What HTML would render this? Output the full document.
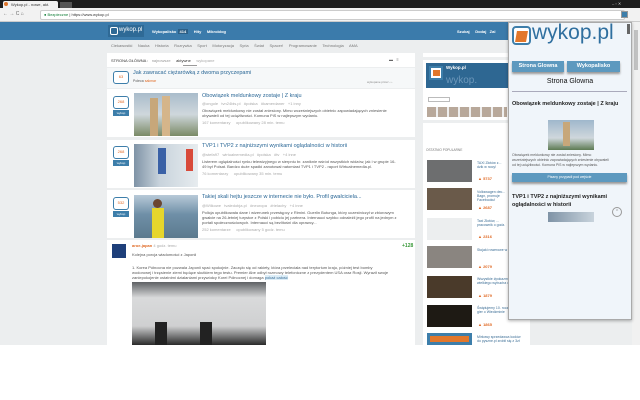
<!DOCTYPE html>
<html><head><meta charset="utf-8"><style>
*{margin:0;padding:0;box-sizing:border-box}
body{width:640px;height:400px;overflow:hidden;background:#fff;font-family:"Liberation Sans",sans-serif;position:relative}
.a{position:absolute}
.t{font-size:4px;color:#555;white-space:nowrap}
.vote{position:absolute;width:16px;height:13px;border:1.5px solid #3d7eaa;border-radius:3px;background:#fff;font-size:4px;color:#e06a25;text-align:center;line-height:10px}
.wb{position:absolute;width:16px;height:6px;background:#3d7eaa;color:#fff;font-size:3px;text-align:center;line-height:6px}
.it{position:absolute;left:107px;width:308px;background:#fff}
.ttl{font-size:5.5px;color:#2a6796}
.thumb{position:absolute;width:33px;height:22px}
.sb{position:absolute;left:427px;width:45px;height:22px}
</style></head><body>
<div class="a" style="left:0;top:0;width:640px;height:8px;background:#1e1e1e"></div>
<div class="a" style="left:3px;top:1px;width:55px;height:7px;background:#f2f2f2;border-radius:2px 2px 0 0;font-size:4px;color:#333;padding:1px 0 0 8px">Wykop.pl - nowe, akt.</div>
<div class="a" style="left:4px;top:2px;width:4px;height:4px;border-radius:50%;background:#e0762b"></div>
<div class="a" style="left:60px;top:2px;width:12px;height:6px;background:#555"></div>
<div class="a t" style="left:612px;top:1px;color:#ccc">– ▫ ✕</div>
<div class="a" style="left:0;top:8px;width:640px;height:14px;background:#f2f2f2;border-bottom:1px solid #ccc"></div>
<div class="a t" style="left:3px;top:11px;color:#666;font-size:5px">← → C ⌂</div>
<div class="a" style="left:40px;top:10px;width:585px;height:10px;background:#fff;border:1px solid #ccc;border-radius:2px"></div>
<div class="a t" style="left:44px;top:12px;color:#0a7a32">● Bezpieczne <span style="color:#333">| https://www.wykop.pl</span></div>
<div class="a" style="left:621px;top:11px;width:7px;height:7px;background:#3d7eaa;border:1px solid #999"></div>
<div class="a" style="left:0;top:22px;width:632px;height:323px;background:#eceeef"></div>
<div class="a" style="left:632px;top:22px;width:8px;height:323px;background:#f1f1f1"></div>
<div class="a" style="left:634px;top:30px;width:4px;height:40px;background:#c1c1c1"></div>
<div class="a" style="left:0;top:22px;width:632px;height:18px;background:#3b7bab"></div>
<div class="a" style="left:108px;top:25px;width:36px;height:12px;background:#2f6a96"></div>
<div class="a" style="left:110px;top:27px;width:8px;height:8px;border:1.5px solid #fff;border-radius:2px"></div>
<div class="a" style="left:119px;top:27px;font-size:6px;color:#fff">wykop.pl</div>
<div class="a t" style="left:152px;top:29px;color:#fff;font-weight:bold">Wykopalisko <span style="background:#2c5f86;padding:0 2px">414</span> &nbsp; &nbsp; Hity &nbsp; &nbsp; Mikroblog</div>
<div class="a t" style="left:457px;top:29px;color:#fff;font-weight:bold">Szukaj &nbsp; &nbsp; Dodaj &nbsp; Zal</div>
<div class="a t" style="left:111px;top:43px;color:#777">Ciekawostki &nbsp; &nbsp; Nauka &nbsp; &nbsp; Historia &nbsp; &nbsp; Rozrywka &nbsp; &nbsp; Sport &nbsp; &nbsp; Motoryzacja &nbsp; &nbsp; Syria &nbsp; &nbsp; Świat &nbsp; &nbsp; Spacer! &nbsp; &nbsp; Programowanie &nbsp; &nbsp; Technologia &nbsp; &nbsp; AMA</div>
<div class="it" style="top:53px;height:14px"></div>
<div class="a t" style="left:111px;top:58px;color:#333">STRONA GŁÓWNA : &nbsp; <span style="color:#999">najnowsze</span> &nbsp; &nbsp; <span style="color:#333">aktywne</span> &nbsp; &nbsp; <span style="color:#aaa">wykopane</span></div>
<div class="a" style="left:183px;top:65px;width:14px;height:1px;background:#999"></div>
<div class="a t" style="left:389px;top:57px;color:#666">▬ &nbsp; ≡</div>
<div class="it" style="top:68px;height:20px;background:#f6f8f9"></div>
<div class="vote" style="left:113px;top:71px">63</div>
<div class="a ttl" style="left:133px;top:70px">Jak zawracać ciężarówką z dwoma przyczepami</div>
<div class="a t" style="left:133px;top:79px;font-size:3.5px">Poleca <span style="color:#e06a25">sakmar</span></div>
<div class="a t" style="left:367px;top:80px;font-size:3px;color:#888">wykopane przez ‹ ›</div>
<div class="it" style="top:89px;height:48px"></div>
<div class="vote" style="left:113px;top:96px">268</div><div class="wb" style="left:113px;top:110px">wykop</div>
<div class="thumb" style="left:134px;top:93px;width:64px;height:43px;background:linear-gradient(#a9bccb,#cfd7dc 50%,#7a8a66)"></div>
<div class="a" style="left:150px;top:98px;width:8px;height:38px;background:#c7a77a"></div>
<div class="a" style="left:162px;top:96px;width:8px;height:40px;background:#d5b58a"></div>
<div class="a ttl" style="left:202px;top:93px">Obowiązek meldunkowy zostaje | Z kraju</div>
<div class="a t" style="left:202px;top:101px;color:#aaa">@ongole &nbsp; tvn24bis.pl &nbsp; #polska &nbsp; #kamerdaner &nbsp; +1 inny</div>
<div class="a t" style="left:202px;top:108px">Obowiązek meldunkowy nie został zniesiony. Mimo wcześniejszych obietnic zapowiadających zniesienie</div>
<div class="a t" style="left:202px;top:113px">obywateli od tej uciążliwości. Komuna PiS w najlepszym wydaniu.</div>
<div class="a t" style="left:202px;top:120px;color:#aaa">167 komentarzy &nbsp; &nbsp; opublikowany 28 min. temu</div>
<div class="it" style="top:140px;height:48px"></div>
<div class="vote" style="left:113px;top:146px">268</div><div class="wb" style="left:113px;top:160px">wykop</div>
<div class="thumb" style="left:134px;top:144px;width:64px;height:43px;background:linear-gradient(90deg,#7f93a6,#c8d3dc 40%,#e7ecef)"></div>
<div class="a" style="left:158px;top:148px;width:8px;height:26px;background:#3a61a6"></div>
<div class="a" style="left:186px;top:149px;width:7px;height:22px;background:#d84a3a"></div>
<div class="a ttl" style="left:202px;top:143px">TVP1 i TVP2 z najniższymi wynikami oglądalności w historii</div>
<div class="a t" style="left:202px;top:152px;color:#aaa">@stefa97 &nbsp; wirtualnemedia.pl &nbsp; #polska &nbsp; #tv &nbsp; +4 inne</div>
<div class="a t" style="left:202px;top:159px">Listerem oglądalności rynku telewizyjnego w sierpniu br. zaniknie wśród wszystkich widzów, jak i w grupie 16-</div>
<div class="a t" style="left:202px;top:164px">49 był Polsat. Bardzo duże spadki zanotował natomiast TVP1 i TVP2 - raport Wirtualnemedia.pl.</div>
<div class="a t" style="left:202px;top:171px;color:#aaa">76 komentarzy &nbsp; &nbsp; opublikowany 35 min. temu</div>
<div class="it" style="top:190px;height:48px"></div>
<div class="vote" style="left:113px;top:197px">532</div><div class="wb" style="left:113px;top:211px">wykop</div>
<div class="thumb" style="left:134px;top:195px;width:64px;height:43px;background:linear-gradient(#b8c9d8,#6f8fa7 45%,#5b7a8e)"></div>
<div class="a" style="left:152px;top:208px;width:12px;height:30px;background:#e6d62c"></div>
<div class="a" style="left:153px;top:199px;width:9px;height:9px;background:#6b4630;border-radius:50%"></div>
<div class="a ttl" style="left:202px;top:194px">Takiej skali hejtu jeszcze w internecie nie było. Profil gwałciciela...</div>
<div class="a t" style="left:202px;top:203px;color:#aaa">@Wilkowe &nbsp; tvaledobja.pl &nbsp; #neuropa &nbsp; #rielachy &nbsp; +4 inne</div>
<div class="a t" style="left:202px;top:210px">Policja opublikowała dane i wizerunek przestępcy z Rimini. Guerlin Butunga, który uczestniczył w zbiorowym</div>
<div class="a t" style="left:202px;top:215px">gwałcie na 26-letniej turystce z Polski i pobiciu jej partnera. Internauci szybko odnaleźli jego profil na jednym z</div>
<div class="a t" style="left:202px;top:220px">portali społecznościowych. Internauci są bezlitośni dla oprawcy...</div>
<div class="a t" style="left:202px;top:227px;color:#aaa">252 komentarze &nbsp; &nbsp; opublikowany 5 godz. temu</div>
<div class="it" style="top:240px;height:105px"></div>
<div class="a" style="left:112px;top:244px;width:14px;height:14px;background:#1e3f7a"></div>
<div class="a t" style="left:132px;top:243px"><b style="color:#e06a25">aroe-japan</b> <span style="color:#aaa">4 godz. temu</span></div>
<div class="a t" style="left:402px;top:243px;color:#3b9a3b;font-weight:bold;font-size:5px">+128</div>
<div class="a t" style="left:132px;top:252px">Kolejna porcja wiadomości z Japonii</div>
<div class="a t" style="left:132px;top:265px">1. Korea Północna nie pozwala Japonii spać spokojnie. Zaczęło się od rakiety, która przeleciała nad terytorium kraju, później test bomby</div>
<div class="a t" style="left:132px;top:270px">wodorowej i trzęsienie ziemi będące skutkiem tego testu. Premier Abe odbył rozmowy telefoniczne z prezydentem USA oraz Rosji. Wyraził swoje</div>
<div class="a t" style="left:132px;top:275px">zaniepokojenie ostatnimi działaniami przywódcy Korei Północnej i domaga <span style="background:#ddeef8;color:#3b6d95">pokaż całość</span></div>
<div class="a" style="left:132px;top:282px;width:134px;height:63px;background:linear-gradient(#5e6164,#d9dadb 25%,#cfd0d1 70%,#2a2a2a)"></div>
<div class="a" style="left:155px;top:322px;width:12px;height:23px;background:#222"></div>
<div class="a" style="left:200px;top:322px;width:12px;height:23px;background:#222"></div>
<div class="a" style="left:423px;top:53px;width:107px;height:4px;background:#fff"></div>
<div class="a" style="left:423px;top:60px;width:107px;height:60px;background:#fff"></div>
<div class="a" style="left:426px;top:63px;width:90px;height:25px;background:#2e6792"></div>
<div class="a" style="left:429px;top:66px;width:14px;height:14px;background:#fff;border:2px solid #3d7eaa"></div>
<div class="a" style="left:433px;top:70px;width:7px;height:6px;background:#e2772b"></div>
<div class="a" style="left:446px;top:75px;font-size:10px;color:#6c97ba">wykop.</div>
<div class="a t" style="left:446px;top:65px;color:#fff;font-weight:bold;font-size:4.5px">Wykop.pl</div>
<div class="a" style="left:428px;top:97px;width:22px;height:5px;background:#fff;border:1px solid #bbb"></div>
<div class="a t" style="left:427px;top:113px;font-size:3.5px">Bądź pierwszą osobą wśród znajomych, któ</div>
<div class="a" style="left:427px;top:107px;width:80px;height:10px;background:repeating-linear-gradient(90deg,#b8a89a 0 9px,#eee 9px 11px)"></div>
<div class="a" style="left:423px;top:123px;width:107px;height:222px;background:#fff"></div>
<div class="a t" style="left:426px;top:148px;font-size:3.2px;color:#777">OSTATNIO POPULARNE</div>
<div class="sb" style="top:160px;background:#6d6e6f"></div>
<div class="sb" style="top:188px;background:#6a5a4a"></div>
<div class="sb" style="top:218px;background:#eceeef"></div>
<div class="sb" style="top:246px;background:#8a8580"></div>
<div class="sb" style="top:276px;background:#4a3a2a"></div>
<div class="sb" style="top:305px;background:#1e1a14"></div>
<div class="sb" style="top:333px;height:12px;background:#e2772b;border:3px solid #3d7eaa"></div>
<div class="a t" style="left:477px;top:161px;color:#3b6d95;font-size:3.5px">TAXI Złotów z...<br>dzik w nocy!</div><div class="a t" style="left:478px;top:176px;color:#e06a25;font-weight:bold">▲ 5737</div>
<div class="a t" style="left:477px;top:190px;color:#3b6d95;font-size:3.5px">Volkswagen dec...<br>Bagn, promuje<br>Facebooku!</div><div class="a t" style="left:478px;top:205px;color:#e06a25;font-weight:bold">▲ 2687</div>
<div class="a t" style="left:477px;top:219px;color:#3b6d95;font-size:3.5px">Taxi Złotów, ...<br>pracownik o godz.</div><div class="a t" style="left:478px;top:234px;color:#e06a25;font-weight:bold">▲ 2316</div>
<div class="a t" style="left:477px;top:248px;color:#3b6d95;font-size:3.5px">Stojaki rowerowe w Radomiu.</div><div class="a t" style="left:478px;top:264px;color:#e06a25;font-weight:bold">▲ 2079</div>
<div class="a t" style="left:477px;top:277px;color:#3b6d95;font-size:3.5px">Wszystkie #pokazmorde od<br>wielkiego wybucha do dziś</div><div class="a t" style="left:478px;top:293px;color:#e06a25;font-weight:bold">▲ 1879</div>
<div class="a t" style="left:477px;top:306px;color:#3b6d95;font-size:3.5px">Świętujemy 10. rocznicę serii<br>gier o Wiedźminie</div><div class="a t" style="left:478px;top:322px;color:#e06a25;font-weight:bold">▲ 1865</div>
<div class="a t" style="left:477px;top:335px;color:#3b6d95;font-size:3.5px">Mirkowy sprzedawca kodów<br>do pyszne.pl zrobił się z 3zł</div>
<div class="a" style="left:508px;top:22px;width:124px;height:298px;background:#f0f5fa;border:1px solid #aaa;box-shadow:0 1px 3px rgba(0,0,0,.3)"></div>
<div class="a" style="left:627px;top:24px;width:3px;height:10px;background:#666"></div>
<div class="a" style="left:512px;top:26px;width:19px;height:19px;border:2.5px solid #3d7eaa;border-radius:4px;background:#fff"></div>
<div class="a" style="left:516px;top:31px;width:11px;height:11px;background:#e2772b;transform:skewX(-10deg)"></div>
<div class="a" style="left:532px;top:21px;font-size:21px;color:#2f6f9f">wykop.pl</div>
<div class="a" style="left:512px;top:61px;width:52px;height:11px;background:#5d99bf;color:#fff;font-size:5.5px;font-weight:bold;text-align:center;line-height:11px;box-shadow:0 2px 2px #999">Strona Glowna</div>
<div class="a" style="left:567px;top:61px;width:53px;height:11px;background:#5d99bf;color:#fff;font-size:5.5px;font-weight:bold;text-align:center;line-height:11px;box-shadow:0 2px 2px #999">Wykopalisko</div>
<div class="a" style="left:508px;top:78px;width:124px;text-align:center;font-size:7px;color:#111">Strona Glowna</div>
<div class="a" style="left:512px;top:91px;width:115px;height:1px;background:#aab"></div>
<div class="a" style="left:512px;top:100px;font-size:5.5px;font-weight:bold;color:#222;line-height:8px;width:112px">Obowiązek meldunkowy zostaje | Z kraju</div>
<div class="a" style="left:548px;top:120px;width:46px;height:30px;background:linear-gradient(#9fb7cc,#cfd7dc 60%,#5d7a52)"></div>
<div class="a" style="left:563px;top:122px;width:7px;height:24px;background:#c7a77a"></div>
<div class="a t" style="left:512px;top:153px;font-size:3.5px;line-height:5px">Obowiązek meldunkowy nie został zniesiony. Mimo<br>wcześniejszych obietnic zapowiadających zniesienie obywateli<br>od tej uciążliwości. Komuna PiS w najlepszym wydaniu.</div>
<div class="a" style="left:512px;top:173px;width:115px;height:9px;background:#5d99bf;color:#fff;font-size:3.5px;text-align:center;line-height:9px;box-shadow:0 2px 2px #999">Pisany przypadł pod wejście</div>
<div class="a" style="left:512px;top:193px;font-size:5.5px;font-weight:bold;color:#222;line-height:8px;width:112px">TVP1 i TVP2 z najniższymi wynikami oglądalności w historii</div>
<div class="a" style="left:548px;top:212px;width:46px;height:10px;background:linear-gradient(90deg,#7f93a6,#c8d3dc)"></div>
<div class="a" style="left:612px;top:207px;width:10px;height:10px;border:1px solid #999;border-radius:50%;font-size:5px;color:#999;text-align:center;line-height:8px">^</div>
</body></html>
